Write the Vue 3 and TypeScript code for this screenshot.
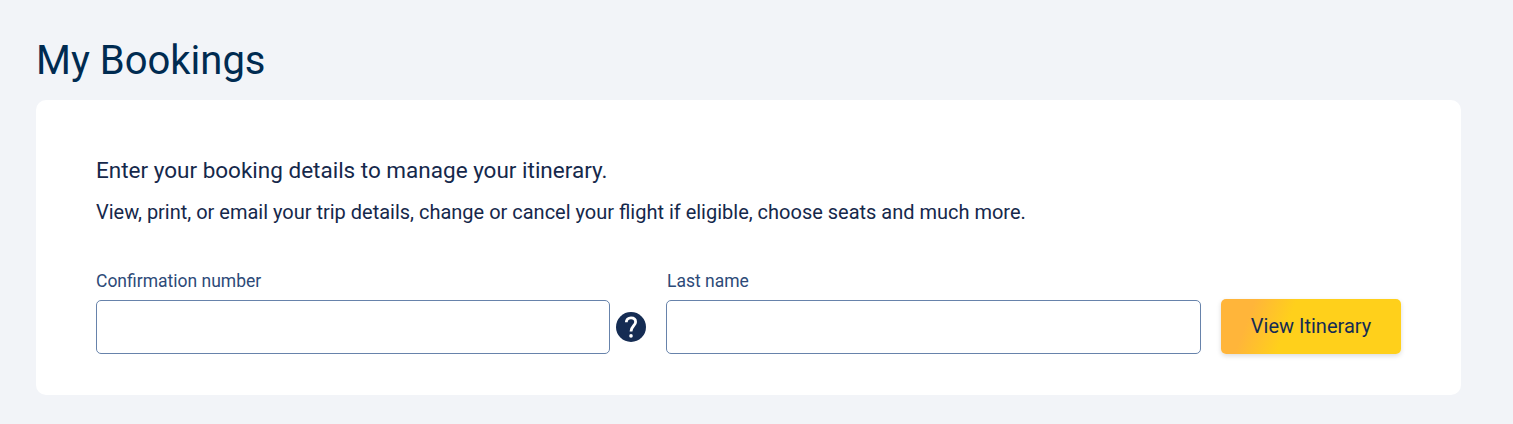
<script setup lang="ts">
import { ref } from 'vue'

const confirmation = ref<string>('')
const lastName = ref<string>('')
</script>

<template>
  <main class="page">
    <h1>My Bookings</h1>
    <section class="card">
      <h2>Enter your booking details to manage your itinerary.</h2>
      <p>View, print, or email your trip details, change or cancel your flight if eligible, choose seats and much more.</p>
      <form class="form" @submit.prevent>
        <div class="field confirmation">
          <label for="confirmation">Confirmation number</label>
          <input id="confirmation" v-model="confirmation" type="text" />
        </div>
        <button class="help" type="button" aria-label="Help">
          <svg viewBox="0 0 30 30" width="30" height="30">
            <circle cx="15" cy="15" r="15" fill="#152c53" />
            <path d="M10.3 10.3C10.3 7.4 12.2 5.8 15 5.8C17.8 5.8 19.6 7.4 19.6 9.9C19.6 13.6 15 14.2 15 19.6" fill="none" stroke="#fff" stroke-width="2.8" />
            <circle cx="15" cy="23.9" r="1.8" fill="#fff" />
          </svg>
        </button>
        <div class="field last">
          <label for="last">Last name</label>
          <input id="last" v-model="lastName" type="text" />
        </div>
        <button class="submit" type="submit">View Itinerary</button>
      </form>
    </section>
  </main>
</template>

<style>
body { margin: 0; background: #f2f4f8; }
</style>

<style scoped>
.page {
  box-sizing: border-box;
  height: 424px;
  padding: 37px 52px 0 36px;
  background: #f2f4f8;
  font-family: Roboto, sans-serif;
  color: #15284b;
}
h1 { margin: 0 0 15px; font-size: 40px; line-height: 48px; font-weight: 400; color: #002b51; }
.card {
  box-sizing: border-box;
  height: 295px;
  padding: 56px 60px 0;
  border-radius: 10px;
  background: #fff;
}
h2 { margin: 0; font-size: 22.5px; line-height: 29px; font-weight: 400; }
p { margin: 13px 0 0; font-size: 19.99px; line-height: 28px; }
.form { display: flex; align-items: flex-end; margin-top: 44px; }
.field { display: flex; flex-direction: column; }
.confirmation { width: 514px; }
.last { width: 535px; }
label { font-size: 17.5px; line-height: 22px; margin-bottom: 8px; color: #2d4a78; }
.last label { padding-left: 1px; }
input {
  box-sizing: border-box;
  width: 100%;
  height: 54px;
  border: 1px solid #6783ab;
  border-radius: 5px;
  background: #fff;
  padding: 0 12px;
  font: 20px Roboto, sans-serif;
}
.help { display: flex; width: 30px; height: 30px; margin: 0 20px 12px 6px; padding: 0; border: 0; background: none; }
.submit {
  width: 180px;
  height: 55px;
  margin-left: 20px;
  padding: 0 0 2px;
  border: 0;
  border-radius: 5px;
  background: linear-gradient(111deg, #ffb53a 17%, #ffd01b 38%);
  box-shadow: 0 2px 5px rgba(0, 0, 0, .14);
  color: #152c53;
  font: 20px Roboto, sans-serif;
}
</style>
